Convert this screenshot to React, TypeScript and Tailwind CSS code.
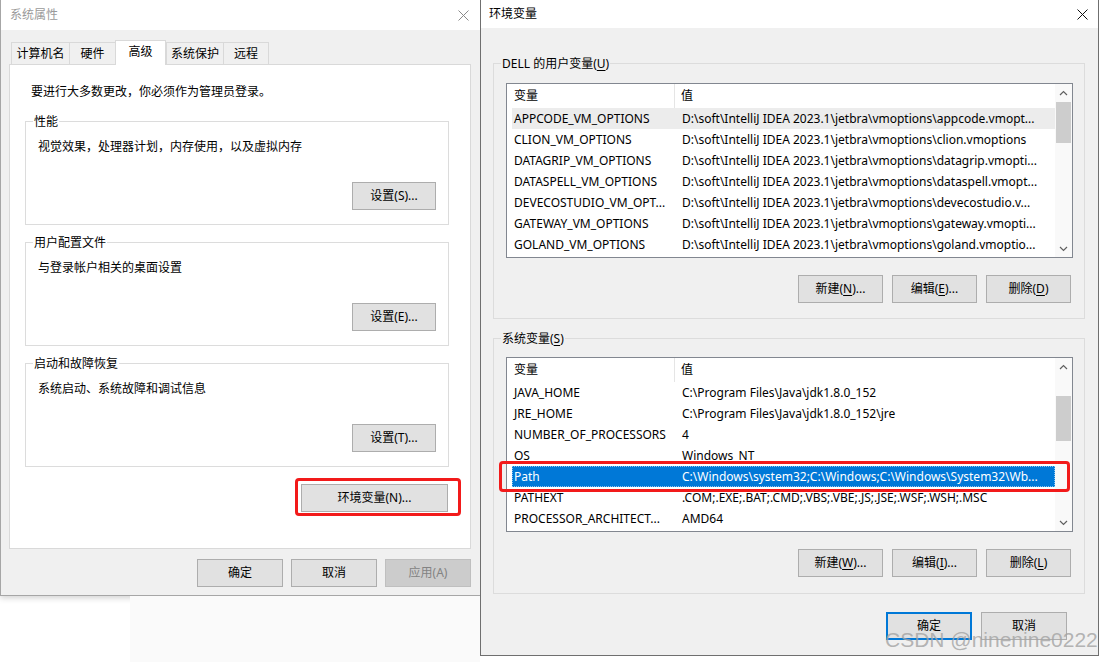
import React from 'react';

type Row = [string, string];

const userVars: Row[] = [
  ['APPCODE_VM_OPTIONS', 'D:\\soft\\IntelliJ IDEA 2023.1\\jetbra\\vmoptions\\appcode.vmopt...'],
  ['CLION_VM_OPTIONS', 'D:\\soft\\IntelliJ IDEA 2023.1\\jetbra\\vmoptions\\clion.vmoptions'],
  ['DATAGRIP_VM_OPTIONS', 'D:\\soft\\IntelliJ IDEA 2023.1\\jetbra\\vmoptions\\datagrip.vmopti...'],
  ['DATASPELL_VM_OPTIONS', 'D:\\soft\\IntelliJ IDEA 2023.1\\jetbra\\vmoptions\\dataspell.vmopt...'],
  ['DEVECOSTUDIO_VM_OPT...', 'D:\\soft\\IntelliJ IDEA 2023.1\\jetbra\\vmoptions\\devecostudio.v...'],
  ['GATEWAY_VM_OPTIONS', 'D:\\soft\\IntelliJ IDEA 2023.1\\jetbra\\vmoptions\\gateway.vmopti...'],
  ['GOLAND_VM_OPTIONS', 'D:\\soft\\IntelliJ IDEA 2023.1\\jetbra\\vmoptions\\goland.vmoptio...'],
];

const systemVars: Row[] = [
  ['JAVA_HOME', 'C:\\Program Files\\Java\\jdk1.8.0_152'],
  ['JRE_HOME', 'C:\\Program Files\\Java\\jdk1.8.0_152\\jre'],
  ['NUMBER_OF_PROCESSORS', '4'],
  ['OS', 'Windows_NT'],
  ['Path', 'C:\\Windows\\system32;C:\\Windows;C:\\Windows\\System32\\Wb...'],
  ['PATHEXT', '.COM;.EXE;.BAT;.CMD;.VBS;.VBE;.JS;.JSE;.WSF;.WSH;.MSC'],
  ['PROCESSOR_ARCHITECT...', 'AMD64'],
];

// underlined access key
const U = ({ c }: { c: string }) => <span className="underline underline-offset-[2px]">{c}</span>;

const CloseIcon = ({ color }: { color: string }) => (
  <svg width="11" height="11" viewBox="0 0 11 11">
    <path d="M0.5 0.5 L10.5 10.5 M10.5 0.5 L0.5 10.5" stroke={color} strokeWidth="1" fill="none" />
  </svg>
);

const Chevron = ({ up }: { up?: boolean }) => (
  <svg width="9" height="6" viewBox="0 0 9 6">
    <polyline
      points={up ? '1,5 4.5,1.5 8,5' : '1,1 4.5,4.5 8,1'}
      fill="none"
      stroke="#606060"
      strokeWidth="1.2"
    />
  </svg>
);

function WinButton({
  children,
  className = '',
  disabled = false,
  focused = false,
}: {
  children: React.ReactNode;
  className?: string;
  disabled?: boolean;
  focused?: boolean;
}) {
  const tone = disabled
    ? 'bg-[#cccccc] border border-[#bfbfbf] text-[#838383]'
    : focused
      ? 'bg-[#e1e1e1] border-2 border-[#0078d7] text-black'
      : 'bg-[#e1e1e1] border border-[#adadad] text-black';
  return (
    <button type="button" className={`h-[28px] shrink-0 flex items-center justify-center text-[12px] leading-none ${tone} ${className}`}>
      {children}
    </button>
  );
}

function GroupBox({
  label,
  labelBg,
  className = '',
  children,
}: {
  label: React.ReactNode;
  labelBg: string;
  className?: string;
  children: React.ReactNode;
}) {
  return (
    <div className={`border border-[#dcdcdc] flex flex-col shrink-0 ${className}`}>
      <span className={`-mt-[9px] ml-[7px] px-[1px] self-start leading-[17px] ${labelBg}`}>{label}</span>
      {children}
    </div>
  );
}

function ListView({
  rows,
  thumbTop,
  thumbHeight,
  grayIndex,
  blueIndex,
}: {
  rows: Row[];
  thumbTop: string;
  thumbHeight: string;
  grayIndex?: number;
  blueIndex?: number;
}) {
  return (
    <div className="w-[567px] h-[175px] border border-[#828790] bg-white flex shrink-0">
      <div className="flex-1 flex flex-col min-w-0">
        <div className="h-[24px] flex items-center shrink-0">
          <div className="w-[168px] h-full pl-[7px] flex items-center border-r border-[#e5e5e5]">变量</div>
          <div className="pl-[6px]">值</div>
        </div>
        {rows.map(([name, value], i) => {
          const blue = i === blueIndex;
          const gray = i === grayIndex;
          return (
            <div
              key={name}
              className={`relative h-[21px] ml-[5px] flex items-center shrink-0 ${
                blue ? 'bg-[#0078d7] text-white' : gray ? 'bg-[#ececec]' : ''
              }`}
            >
              {blue && <div className="absolute inset-0 border border-dotted border-[#8cc4f0]" />}
              <div className="w-[163px] pl-[2px] whitespace-nowrap overflow-hidden shrink-0">{name}</div>
              <div className="flex-1 pl-[7px] whitespace-nowrap overflow-hidden">{value}</div>
              {blue && (
                <div className="absolute -left-[13px] -top-[5px] w-[571px] h-[31px] border-[3px] border-[#f21a1a] rounded-[4px]" />
              )}
            </div>
          );
        })}
      </div>
      <div className="w-[17px] flex flex-col bg-[#f9f9f9] shrink-0">
        <div className="h-[17px] flex items-center justify-center">
          <Chevron up />
        </div>
        <div className="flex-1">
          <div className={`mx-auto w-[15px] bg-[#cdcdcd] ${thumbTop} ${thumbHeight}`} />
        </div>
        <div className="h-[17px] flex items-center justify-center">
          <Chevron />
        </div>
      </div>
    </div>
  );
}

function LeftWindow() {
  const tabs = [
    { label: '计算机名', w: 'w-[59px]' },
    { label: '硬件', w: 'w-[47px]' },
    { label: '高级', w: 'w-[51px]', active: true },
    { label: '系统保护', w: 'w-[58px]' },
    { label: '远程', w: 'w-[46px]' },
  ];

  const groups = [
    { title: '性能', desc: '视觉效果，处理器计划，内存使用，以及虚拟内存', btn: '设置(S)...', mt: 'mt-[21px]' },
    { title: '用户配置文件', desc: '与登录帐户相关的桌面设置', btn: '设置(E)...', mt: 'mt-[17px]' },
    { title: '启动和故障恢复', desc: '系统启动、系统故障和调试信息', btn: '设置(T)...', mt: 'mt-[17px]' },
  ];

  return (
    <div className="w-[480px] h-full shrink-0 flex flex-col">
      <div className="h-[596px] flex flex-col border-l border-b border-[#a6a6a6] bg-[#f0f0f0] shadow-[0_2px_6px_rgba(0,0,0,0.18)] shrink-0">
        {/* title bar */}
        <div className="h-[30px] bg-white flex items-center justify-between pl-[9px] pr-[11px] shrink-0">
          <span className="text-[#9a9a9a]">系统属性</span>
          <CloseIcon color="#8a8a8a" />
        </div>

        <div className="flex-1 flex flex-col pl-[8px]">
          {/* tabs */}
          <div className="mt-[9px] h-[25px] flex items-end pl-[2px] shrink-0">
            {tabs.map((t) =>
              t.active ? (
                <div
                  key={t.label}
                  className={`${t.w} h-[25px] -mb-px relative z-10 bg-white border-t border-l border-r border-[#d9d9d9] flex items-center justify-center pb-[2px]`}
                >
                  {t.label}
                </div>
              ) : (
                <div
                  key={t.label}
                  className={`${t.w} h-[22px] bg-[#f0f0f0] border-t border-l border-r border-[#d9d9d9] -mr-px flex items-center justify-center`}
                >
                  {t.label}
                </div>
              ),
            )}
          </div>

          {/* tab panel */}
          <div className="w-[462px] h-[485px] bg-white border border-[#d9d9d9] flex flex-col shrink-0">
            <div className="mt-[18px] pl-[21px] leading-[17px]">要进行大多数更改，你必须作为管理员登录。</div>

            {groups.map((g) => (
              <GroupBox key={g.title} label={g.title} labelBg="bg-white" className={`${g.mt} ml-[15px] w-[424px] h-[104px]`}>
                <div className="mt-[8px] ml-[12px] leading-[17px]">{g.desc}</div>
                <WinButton className="mt-[27px] ml-[326px] w-[84px]">{g.btn}</WinButton>
              </GroupBox>
            ))}

            <div className="relative mt-[17px] ml-[291px] self-start">
              <WinButton className="w-[147px]">环境变量(N)...</WinButton>
              <div className="absolute -left-[6px] -top-[6px] w-[166px] h-[38px] border-[3px] border-[#f21a1a] rounded-[4px]" />
            </div>
          </div>

          {/* dialog buttons */}
          <div className="mt-[10px] flex justify-end gap-[8px] pr-[9px]">
            <WinButton className="w-[86px]">确定</WinButton>
            <WinButton className="w-[86px]">取消</WinButton>
            <WinButton className="w-[86px]" disabled>
              应用(A)
            </WinButton>
          </div>
        </div>
      </div>
      <div className="flex-1 flex">
        <div className="w-[130px]" />
        <div className="flex-1 bg-[#fafafa]" />
      </div>
    </div>
  );
}

function RightWindow() {
  return (
    <div className="w-[619px] h-[656px] shrink-0 flex flex-col border-l border-r border-b border-[#6f6f6f] bg-[#f0f0f0]">
      {/* title bar */}
      <div className="h-[28px] bg-white flex items-center justify-between pl-[8px] pr-[10px] shrink-0">
        <span>环境变量</span>
        <CloseIcon color="#111111" />
      </div>

      <div className="flex-1 flex flex-col pl-[12px]">
        <GroupBox
          labelBg="bg-[#f0f0f0]"
          className="mt-[35px] w-[592px] h-[256px]"
          label={
            <>
              DELL 的用户变量(<U c="U" />)
            </>
          }
        >
          <div className="mt-[11px] ml-[12px]">
            <ListView rows={userVars} grayIndex={0} thumbTop="mt-[1px]" thumbHeight="h-[41px]" />
          </div>
          <div className="mt-[17px] self-end mr-[13px] flex gap-[9px]">
            <WinButton className="w-[85px]">
              新建(<U c="N" />)...
            </WinButton>
            <WinButton className="w-[85px]">
              编辑(<U c="E" />)...
            </WinButton>
            <WinButton className="w-[85px]">
              删除(<U c="D" />)
            </WinButton>
          </div>
        </GroupBox>

        <GroupBox
          labelBg="bg-[#f0f0f0]"
          className="mt-[19px] w-[592px] h-[256px]"
          label={
            <>
              系统变量(<U c="S" />)
            </>
          }
        >
          <div className="mt-[10px] ml-[12px]">
            <ListView rows={systemVars} blueIndex={4} thumbTop="mt-[21px]" thumbHeight="h-[45px]" />
          </div>
          <div className="mt-[17px] self-end mr-[13px] flex gap-[9px]">
            <WinButton className="w-[85px]">
              新建(<U c="W" />)...
            </WinButton>
            <WinButton className="w-[85px]">
              编辑(<U c="I" />)...
            </WinButton>
            <WinButton className="w-[85px]">
              删除(<U c="L" />)
            </WinButton>
          </div>
        </GroupBox>

        <div className="mt-[18px] self-end mr-[31px] flex gap-[9px]">
          <WinButton className="w-[86px]" focused>
            确定
          </WinButton>
          <WinButton className="w-[86px]">取消</WinButton>
        </div>
      </div>
    </div>
  );
}

export default function App() {
  return (
    <div className="relative w-[1105px] h-[662px] overflow-hidden bg-white flex items-start text-[12px] text-black font-['Noto_Sans','Noto_Sans_CJK_SC',sans-serif]">
      <LeftWindow />
      <RightWindow />
      {/* CSDN watermark */}
      <div className="absolute left-[885px] top-[629px] text-[21px] leading-none text-[#a3a3a3]/80 whitespace-nowrap pointer-events-none font-['Liberation_Sans',sans-serif]">
        CSDN @ninenine0222
      </div>
    </div>
  );
}
